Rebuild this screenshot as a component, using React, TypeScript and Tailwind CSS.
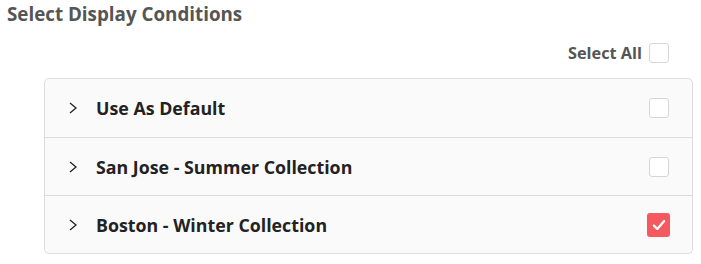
import React from "react";

const rows = [
  { label: "Use As Default", checked: false },
  { label: "San Jose - Summer Collection", checked: false },
  { label: "Boston - Winter Collection", checked: true },
];

function Box({ checked }: { checked: boolean }) {
  if (checked) {
    return (
      <div className="w-[23px] h-[24px] rounded-[3px] bg-[#f5585e] flex items-center justify-center -mr-[1px]">
        <svg width="16" height="16" viewBox="0 0 14 14" fill="none">
          <path d="M2.5 7.5 L5.5 10.5 L11.5 3.5" stroke="white" strokeWidth="2" strokeLinecap="round" strokeLinejoin="round" />
        </svg>
      </div>
    );
  }
  return <div className="w-[20px] h-[20px] rounded-[3px] border border-[#d6d6d6] bg-white" />;
}

export default function App() {
  return (
    <div className="w-[701px] h-[264px] bg-white" style={{ fontFamily: '"Open Sans", sans-serif' }}>
      <div className="pl-[7px] text-[18.8px] font-bold text-[#555] leading-[28px]">Select Display Conditions</div>
      <div className="flex items-center justify-end pr-[32px] mt-[15px] gap-[7px]">
        <span className="text-[16.3px] font-bold text-[#555] leading-[20px]">Select All</span>
        <Box checked={false} />
      </div>
      <div className="ml-[44px] mr-[8px] mt-[15px] border border-[#dcdcdc] rounded-[5px] bg-[#fafafa]">
        {rows.map((r, i) => (
          <div
            key={r.label}
            className={"flex items-center h-[58px] pl-[23px] pr-[23px] " + (i > 0 ? "border-t border-[#dcdcdc]" : "")}
          >
            <svg width="10" height="12" viewBox="0 0 10 12" fill="none" className="mr-[18px]">
              <path d="M2 1 L8 6 L2 11" stroke="#222" strokeWidth="1.3" />
            </svg>
            <span className="text-[17.8px] font-bold text-[#222] flex-1 leading-[24px]">{r.label}</span>
            <Box checked={r.checked} />
          </div>
        ))}
      </div>
    </div>
  );
}
